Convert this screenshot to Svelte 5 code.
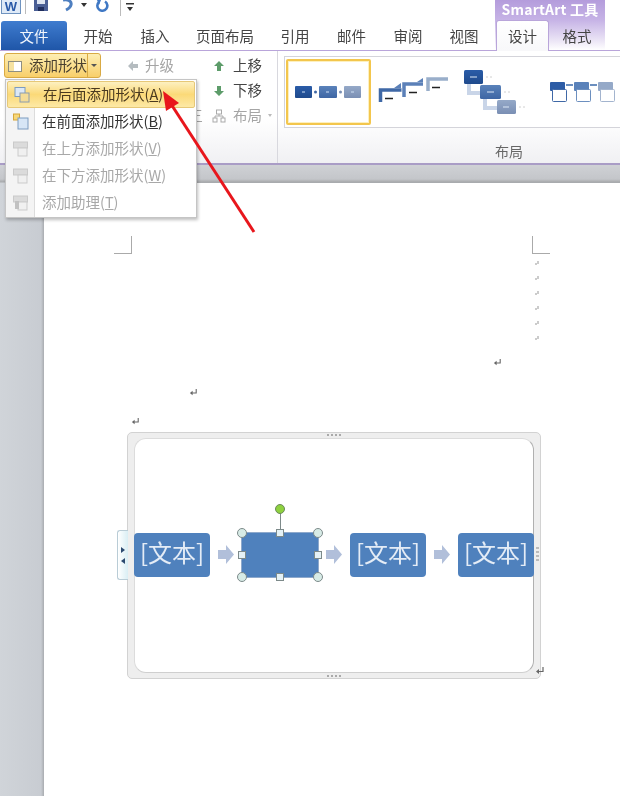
<script>
  const tabs = [
    { label: "开始", w: 60 },
    { label: "插入", w: 54 },
    { label: "页面布局", w: 86 },
    { label: "引用", w: 54 },
    { label: "邮件", w: 59 },
    { label: "审阅", w: 54 },
    { label: "视图", w: 58 },
  ];

  const menuItems = [
    { label: "在后面添加形状", key: "A", active: true, muted: false },
    { label: "在前面添加形状", key: "B", active: false, muted: false },
    { label: "在上方添加形状", key: "V", active: false, muted: true },
    { label: "在下方添加形状", key: "W", active: false, muted: true },
    { label: "添加助理", key: "T", active: false, muted: true },
  ];

  const softReturns = [0, 1, 2, 3, 4, 5];
  const corners = ["tl", "tr", "bl", "br"];
  const sides = ["t", "r", "b", "l"];
</script>

{#snippet returnMark(size)}
  <svg class="ret" width={size} height={size} viewBox="0 0 10 10">
    <path d="M8 1v4.500H3" fill="none" stroke="#666" stroke-width="1.200" />
    <path d="M4 3 1 5.500 4 8z" fill="#666" />
  </svg>
{/snippet}

{#snippet menuIcon(i)}
  <svg width="18" height="18" viewBox="0 0 18 18">
    {#if i === 0}
      <rect x="2" y="1.500" width="10" height="9" fill="#dce8f6" stroke="#7d9cc0" />
      <rect x="7" y="7" width="9" height="9" fill="#f4dc96" stroke="#8a9cb0" />
    {:else if i === 1}
      <rect x="1.500" y="1" width="6" height="6" fill="#f7d777" stroke="#d6a63a" />
      <rect x="6" y="5" width="10" height="11" fill="#d7e6f6" stroke="#7d9cc0" />
    {:else}
      <g opacity="0.55">
        <rect x="1.500" y="2" width="14" height="6" fill="#c8c8c8" stroke="#a8a8a8" />
        <rect x="6" y="8" width="9" height="8" fill="#eee" stroke="#aaa" />
        {#if i === 4}<rect x="3" y="7" width="4" height="8" fill="#999" />{/if}
      </g>
    {/if}
  </svg>
{/snippet}

<div class="app">
  <div class="qat">
    <svg class="q-word" width="20" height="14" viewBox="0 0 20 14">
      <rect x="0.500" y="-2" width="19" height="15.500" fill="#dfeaf7" stroke="#6f93bf" />
      <text x="10" y="11" text-anchor="middle" class="w-letter">W</text>
    </svg>
    <span class="q-sep"></span>
    <svg class="q-save" width="14" height="12" viewBox="0 0 14 12">
      <path d="M0 0h14v11H0z" fill="#4a5f95" />
      <rect x="3" y="0" width="8" height="4" fill="#dfe6f2" />
      <rect x="4" y="7" width="6" height="4" fill="#1f2d5c" />
    </svg>
    <svg class="q-undo" width="14" height="12" viewBox="0 0 14 12">
      <path d="M3 0c5-1 9 1 8 5-.6 2.500-3 4-5 5" fill="none" stroke="#4e7fc0" stroke-width="3" />
    </svg>
    <span class="q-caret"></span>
    <svg class="q-redo" width="14" height="12" viewBox="0 0 14 12">
      <path d="M9 1.500A5 5 0 1 1 3 2" fill="none" stroke="#3f78c4" stroke-width="2.600" />
      <path d="M5 0 1 0l2 5z" fill="#3f78c4" />
    </svg>
    <span class="q-sep second"></span>
    <svg class="q-custom" width="9" height="8" viewBox="0 0 9 8">
      <path d="M0 0h8v1.500H0z" fill="#333" />
      <path d="M1 4h6L4 8z" fill="#333" />
    </svg>
    <div class="context-title">SmartArt 工具</div>
  </div>

  <div class="tabs">
    <div class="tab-file">文件</div>
    {#each tabs as tab}
      <div class="tab" style="width: {tab.w}px">{tab.label}</div>
    {/each}
    <div class="context-tabs">
      <div class="tab-active">设计</div>
      <div class="tab-format">格式</div>
    </div>
  </div>

  <div class="ribbon">
    <div class="group-shapes">
      <div class="shape-col">
        <div class="split-btn">
          <span class="split-main">
            <svg width="15" height="14" viewBox="0 0 15 14">
              <rect x="0.500" y="2.500" width="13" height="10" fill="#fff" stroke="#8f8f80" />
              <rect x="1" y="3" width="5" height="9" fill="#f6e2a0" />
            </svg>
            <span>添加形状</span>
          </span>
          <span class="split-arrow"></span>
        </div>
      </div>
      <div class="level-col">
        <div class="cmd muted">
          <svg class="cmd-icon" width="12" height="12" viewBox="0 0 12 12"><path d="M6 1 1 6l5 5V8h5V4H6z" fill="#b5bcc0" /></svg>
          升级
        </div>
        <div class="cmd"></div>
        <div class="cmd muted end">三</div>
      </div>
      <div class="move-col">
        <div class="cmd">
          <svg class="cmd-icon" width="12" height="12" viewBox="0 0 12 12"><path d="M6 1 1 6h3v5h4V6h3z" fill="#5d9c6a" /></svg>
          上移
        </div>
        <div class="cmd">
          <svg class="cmd-icon" width="12" height="12" viewBox="0 0 12 12"><path d="M6 11 1 6h3V1h4v5h3z" fill="#5d9c6a" /></svg>
          下移
        </div>
        <div class="cmd muted">
          <svg class="cmd-icon layout-icon" width="14" height="14" viewBox="0 0 14 14">
            <rect x="4.500" y="1" width="5" height="4" fill="none" stroke="#aaa" />
            <path d="M7 5v2M3 9V7h8v2" fill="none" stroke="#aaa" />
            <rect x="1" y="9" width="4" height="4" fill="none" stroke="#aaa" />
            <rect x="9" y="9" width="4" height="4" fill="none" stroke="#aaa" />
          </svg>
          布局 <span class="mini-caret"></span>
        </div>
      </div>
    </div>

    <div class="group-layouts">
      <div class="gallery">
        <div class="thumb-selected">
          <svg width="72" height="16" viewBox="0 0 72 16">
            <defs>
              <linearGradient id="tb1" x1="0" y1="0" x2="0" y2="1"><stop offset="0" stop-color="#2a5ca8" /><stop offset="1" stop-color="#1f4a8c" /></linearGradient>
              <linearGradient id="tb2" x1="0" y1="0" x2="0" y2="1"><stop offset="0" stop-color="#5a82ba" /><stop offset="1" stop-color="#3e66a4" /></linearGradient>
              <linearGradient id="tb3" x1="0" y1="0" x2="0" y2="1"><stop offset="0" stop-color="#95a9c8" /><stop offset="1" stop-color="#7a8fb4" /></linearGradient>
            </defs>
            <rect x="2" y="2" width="17" height="12" rx="1" fill="url(#tb1)" />
            <rect x="26" y="2" width="18" height="12" rx="1" fill="url(#tb2)" />
            <rect x="51" y="2" width="17" height="12" rx="1" fill="url(#tb3)" />
            <circle cx="22.500" cy="8" r="1.500" fill="#3e66a4" />
            <circle cx="47.500" cy="8" r="1.500" fill="#7a8fb4" />
            <path d="M9 8h3M33 8h3M58 8h3" stroke="#cfe0f5" />
          </svg>
        </div>
        <svg class="thumbs" width="248" height="70" viewBox="372 57 248 70">
          <!-- staircase layout -->
          <g fill="none" stroke-width="3.500">
            <path d="M381.500 102V90h21" stroke="#3f68a6" />
            <path d="M405 97V84h19" stroke="#5b80b8" />
            <path d="M429 91V79h20" stroke="#99aeca" />
          </g>
          <path d="M395 88l7-5v5zM418 82l6-4v4z" fill="#5b80b8" />
          <path d="M386 98.500h8M410 92.500h8M433 87.500h8" stroke="#222" stroke-width="1.300" />
          <!-- descending boxes -->
          <path d="M470 84v9h12M486 99v9h12" fill="none" stroke="#c9d5e8" stroke-width="4" />
          <rect x="465" y="70" width="19" height="14" rx="1.500" fill="url(#tb1)" />
          <rect x="481" y="85" width="21" height="14" rx="1.500" fill="url(#tb2)" />
          <rect x="498" y="100" width="19" height="14" rx="1.500" fill="url(#tb3)" />
          <path d="M471 77h7M488 92h7M504 107h6" stroke="#dce8f6" />
          <path d="M487 77h8M505 92h8M520 107h8" stroke="#d0d0d0" stroke-dasharray="2 2" />
          <!-- cards -->
          <rect x="551" y="82" width="15" height="9" rx="1" fill="#2c5ca6" />
          <rect x="575" y="82" width="15" height="9" rx="1" fill="#5a82ba" />
          <rect x="599" y="82" width="15" height="9" rx="1" fill="#95a9c8" />
          <g fill="#fff">
            <rect x="553.500" y="89.500" width="14" height="12" rx="1" stroke="#3f68a6" />
            <rect x="577.500" y="89.500" width="14" height="12" rx="1" stroke="#6c8fbf" />
            <rect x="601.500" y="89.500" width="14" height="12" rx="1" stroke="#a3b4ce" />
          </g>
          <path d="M567 85h7M591 85h7" stroke="#6c8fbf" stroke-width="2" />
        </svg>
      </div>
      <div class="group-label">布局</div>
    </div>
  </div>

  <div class="workspace">
    <div class="page">
      <div class="crops">
        <span class="crop crop-left"></span>
        <span class="crop crop-right"></span>
      </div>
      <div class="soft-returns">
        {#each softReturns as r}
          <svg width="6" height="6" viewBox="0 0 6 6"><path d="M4 0v3M3 3H1" stroke="#999" fill="none" /></svg>
        {/each}
      </div>
      <div class="para para-right">{@render returnMark(9)}</div>
      <div class="para para-mid">{@render returnMark(9)}</div>
      <div class="para para-anchor">{@render returnMark(9)}</div>

      <div class="smartart">
        <div class="side-tab">
          <span class="tri-r"></span>
          <span class="tri-l"></span>
        </div>
        <span class="grip grip-t"></span>
        <span class="grip grip-b"></span>
        <span class="grip grip-r"></span>
        <div class="canvas">
          <div class="flow-box">[文本]</div>
          <span class="flow-arrow"></span>
          <div class="flow-box selected">
            <span class="rot-line"></span>
            <span class="rot-handle"></span>
            {#each corners as c}<span class="h-corner {c}"></span>{/each}
            {#each sides as s}<span class="h-side {s}"></span>{/each}
          </div>
          <span class="flow-arrow"></span>
          <div class="flow-box">[文本]</div>
          <span class="flow-arrow"></span>
          <div class="flow-box">[文本]</div>
        </div>
        <span class="end-return">{@render returnMark(10)}</span>
      </div>
    </div>
  </div>

  <!-- dropdown opened from the split button -->
  <div class="menu">
    {#each menuItems as item, i}
      <div class="menu-item" class:active={item.active} class:muted={item.muted}>
        <span class="menu-icon">{@render menuIcon(i)}</span>
        <span class="menu-text">{item.label}(<u>{item.key}</u>)</span>
      </div>
    {/each}
  </div>

  <!-- red annotation arrow -->
  <svg class="annotation" width="620" height="260" viewBox="0 0 620 260">
    <path d="M254 232 171 104" stroke="#e8161c" stroke-width="3" fill="none" />
    <path d="M163 91 179 103 166 111z" fill="#e8161c" />
  </svg>
</div>

<style>
  :global(body) {
    margin: 0;
  }

  .app {
    position: relative;
    width: 620px;
    height: 796px;
    overflow: hidden;
    display: flex;
    flex-direction: column;
    background: #fff;
    color: #444;
    font-family: "Noto Sans CJK SC", "Liberation Sans", sans-serif;
    font-size: 14.5px;
    filter: blur(0.4px);
  }

  /* ── Quick access bar ── */
  .qat {
    height: 20px;
    flex: none;
    display: flex;
    align-items: flex-start;
    position: relative;
  }

  .q-word { margin-left: 1px; }
  .w-letter { font: bold 13px "Liberation Sans", sans-serif; fill: #2a5aa8; }
  .q-sep { width: 1px; height: 14px; background: #bbb; margin-left: 4px; }
  .q-sep.second { height: 16px; margin-left: 10px; }
  .q-save { margin-left: 8px; }
  .q-undo { margin-left: 12px; }
  .q-caret {
    margin: 3px 0 0 7px;
    border-left: 3px solid transparent;
    border-right: 3px solid transparent;
    border-top: 4px solid #333;
  }
  .q-redo { margin-left: 9px; }
  .q-custom { margin: 3px 0 0 5px; }

  .context-title {
    position: absolute;
    left: 495px;
    top: 0;
    width: 110px;
    height: 20px;
    box-sizing: border-box;
    text-align: center;
    line-height: 18px;
    font-size: 14px;
    font-weight: 600;
    letter-spacing: 0.2px;
    color: #fff;
    background: linear-gradient(#b49cdc, #c6b3e6);
    white-space: nowrap;
  }

  /* ── Tabs ── */
  .tabs {
    height: 30px;
    flex: none;
    display: flex;
    align-items: stretch;
    position: relative;
    z-index: 1;
  }

  .tab-file {
    width: 66px;
    margin: 1px 1px 0 1px;
    border-radius: 3px 3px 0 0;
    background: linear-gradient(#3f7ccf, #1f56a8);
    color: #f2f6fc;
    text-align: center;
    line-height: 30px;
  }

  .tab {
    text-align: center;
    line-height: 32px;
    flex: none;
  }

  .context-tabs {
    margin-left: 2px;
    width: 110px;
    display: flex;
    background: linear-gradient(#c6b3e6, #ece6f6 70%, #fff);
  }

  .tab-active {
    width: 53px;
    margin-left: 1px;
    box-sizing: border-box;
    height: 31px;
    background: linear-gradient(#fff, #f8f8fa);
    border: 1px solid #b9a5da;
    border-bottom: none;
    border-radius: 3px 3px 0 0;
    text-align: center;
    line-height: 30px;
  }

  .tab-format {
    flex: 1;
    text-align: center;
    line-height: 32px;
  }

  /* ── Ribbon ── */
  .ribbon {
    height: 115px;
    flex: none;
    box-sizing: border-box;
    display: flex;
    border-top: 1px solid #b9a5da;
    border-bottom: 2px solid #a99cc6;
    background: linear-gradient(#fff 60%, #f0f0f3);
  }

  .group-shapes {
    width: 278px;
    flex: none;
    box-sizing: border-box;
    display: flex;
    padding: 2px 0 0 4px;
    border-right: 1px solid #d8d8de;
  }

  .shape-col { width: 121px; }

  .split-btn {
    width: 97px;
    height: 25px;
    box-sizing: border-box;
    display: flex;
    border: 1px solid #d9aa44;
    border-radius: 3px;
    background: linear-gradient(#fdeeb4, #f8cf6a);
    color: #4a4030;
  }

  .split-main {
    flex: 1;
    display: flex;
    align-items: center;
    gap: 6px;
    padding-left: 3px;
    border-right: 1px solid #d9aa44;
    line-height: 1;
    white-space: nowrap;
    min-width: 0;
  }

  .split-arrow {
    width: 12px;
    flex: none;
    position: relative;
  }

  .split-arrow::after {
    content: "";
    position: absolute;
    left: 3px;
    top: 10px;
    border-left: 3px solid transparent;
    border-right: 3px solid transparent;
    border-top: 3px solid #555;
  }

  .level-col { width: 82px; display: flex; flex-direction: column; }
  .level-col .cmd-icon { margin-right: -2px; }
  .move-col { flex: 1; display: flex; flex-direction: column; }
  .move-col .cmd-icon { margin-left: 6px; }
  .move-col .layout-icon { margin-left: 5px; margin-right: -1px; }

  .cmd {
    height: 25px;
    display: flex;
    align-items: center;
    gap: 8px;
    line-height: 1;
    white-space: nowrap;
  }

  .cmd.muted { color: #a5a5a5; }
  .cmd.end { justify-content: flex-end; padding-right: 4px; }
  .cmd-icon { margin-left: 2px; }

  .mini-caret {
    margin-left: -2px;
    border-left: 2.500px solid transparent;
    border-right: 2.500px solid transparent;
    border-top: 3px solid #bbb;
  }

  .group-layouts {
    flex: 1;
    display: flex;
    flex-direction: column;
    padding: 5px 0 0 6px;
    min-width: 0;
  }

  .gallery {
    height: 72px;
    flex: none;
    display: flex;
    box-sizing: border-box;
    border: 1px solid #d4d4da;
    border-right: none;
    background: #fff;
    padding-left: 1px;
    align-items: center;
  }

  .thumb-selected {
    width: 85px;
    height: 66px;
    flex: none;
    box-sizing: border-box;
    display: flex;
    align-items: center;
    justify-content: center;
    border: 2px solid #f3c64d;
    border-radius: 2px;
    box-shadow: inset 0 0 0 1px #fdf0bf;
    background: #fff;
  }

  .thumbs { flex: none; display: block; }

  .group-label {
    text-align: center;
    margin-top: 13px;
    padding-left: 114px;
    font-size: 14px;
    line-height: 20px;
    color: #666;
  }

  /* ── Document ── */
  .workspace {
    flex: 1;
    min-height: 0;
    padding: 18px 0 0 44px;
    background:
      linear-gradient(#cfd1d5, #c4c6ca 14px, #a8aaac 17px, transparent 18px),
      linear-gradient(90deg, #d0d4d9, #c8ccd2 41px, #a9acb0 44px);
  }

  .page {
    height: 100%;
    background: #fff;
    padding-top: 53px;
    box-sizing: border-box;
    position: relative;
  }

  .crops {
    display: flex;
    justify-content: space-between;
    margin-left: 70px;
    width: 436px;
    height: 18px;
  }

  .crop {
    width: 17px;
    height: 17px;
    border-bottom: 1px solid #aaa;
  }
  .crop-left { border-right: 1px solid #aaa; }
  .crop-right { border-left: 1px solid #aaa; }

  .soft-returns {
    display: flex;
    flex-direction: column;
    gap: 9px;
    margin: 7px 0 0 490px;
    width: 6px;
  }

  .soft-returns svg { display: block; }

  .para { height: 9px; line-height: 0; }
  .para-right { margin: 16px 0 0 449px; }
  .para-mid { margin: 21px 0 0 145px; }
  .para-anchor { margin: 20px 0 0 87px; }

  .smartart {
    position: relative;
    width: 414px;
    height: 247px;
    box-sizing: border-box;
    margin: 6px 0 0 83px;
    padding: 5px 6px 5px 6px;
    border: 1px solid #d2d2d2;
    border-radius: 5px;
    background: #eeeeee;
  }

  .canvas {
    height: 100%;
    box-sizing: border-box;
    display: flex;
    align-items: center;
    gap: 8px;
    padding-bottom: 2px;
    background: #fff;
    border: 1px solid #dcdcdc;
    border-right-color: #b0b0b0;
    border-bottom-color: #cfcfcf;
    border-radius: 12px;
  }

  .flow-box {
    width: 76px;
    height: 44px;
    flex: none;
    box-sizing: border-box;
    padding-bottom: 5px;
    display: flex;
    align-items: center;
    justify-content: center;
    background: #4f81bd;
    border-radius: 4px;
    color: #e4ecf6;
    font-size: 24px;
    line-height: 1;
    position: relative;
    white-space: nowrap;
  }

  .flow-box:first-child { margin-left: -1px; }

  .flow-box.selected {
    width: 78px;
    height: 46px;
    padding-bottom: 0;
    border-radius: 0;
    border: 1px solid #8ea9cc;
    margin: 0 -1px;
  }

  .flow-arrow {
    width: 16px;
    height: 19px;
    flex: none;
    background: #b1bfda;
    clip-path: polygon(0 26%, 50% 26%, 50% 0, 100% 50%, 50% 100%, 50% 74%, 0 74%);
  }

  .h-corner, .h-side, .rot-handle {
    position: absolute;
    box-sizing: border-box;
  }

  .h-corner {
    width: 10px;
    height: 10px;
    border-radius: 50%;
    background: #d7ebe6;
    border: 1px solid #7d8a8a;
  }
  .h-corner.tl { left: -5px; top: -5px; }
  .h-corner.tr { right: -5px; top: -5px; }
  .h-corner.bl { left: -5px; bottom: -5px; }
  .h-corner.br { right: -5px; bottom: -5px; }

  .h-side {
    width: 8px;
    height: 8px;
    background: #e4f1f6;
    border: 1px solid #7d8a8a;
  }
  .h-side.t { left: 50%; top: -4px; margin-left: -4px; }
  .h-side.b { left: 50%; bottom: -4px; margin-left: -4px; }
  .h-side.l { left: -4px; top: 50%; margin-top: -4px; }
  .h-side.r { right: -4px; top: 50%; margin-top: -4px; }

  .rot-line {
    position: absolute;
    left: 50%;
    top: -20px;
    width: 1px;
    height: 20px;
    background: #7d8a8a;
  }

  .rot-handle {
    left: 50%;
    top: -29px;
    margin-left: -5px;
    width: 10px;
    height: 10px;
    border-radius: 50%;
    background: #8ed13f;
    border: 1px solid #6b8a5a;
  }

  .side-tab {
    position: absolute;
    left: -11px;
    top: 97px;
    width: 11px;
    height: 50px;
    box-sizing: border-box;
    border: 1px solid #b9ccd6;
    border-right: none;
    border-radius: 3px 0 0 3px;
    background: linear-gradient(90deg, #fff, #d9eef4);
    display: flex;
    flex-direction: column;
    align-items: center;
    justify-content: center;
    gap: 5px;
  }

  .tri-r {
    border-top: 3px solid transparent;
    border-bottom: 3px solid transparent;
    border-left: 4px solid #2c4a70;
  }
  .tri-l {
    border-top: 3px solid transparent;
    border-bottom: 3px solid transparent;
    border-right: 4px solid #2c4a70;
  }

  .grip {
    position: absolute;
  }
  .grip-t, .grip-b {
    left: 199px;
    width: 14px;
    height: 2px;
    background: repeating-linear-gradient(90deg, #aaa 0 2px, transparent 2px 4px);
  }
  .grip-t { top: 1px; }
  .grip-b { bottom: 1px; }
  .grip-r {
    right: 1px;
    top: 114px;
    width: 3px;
    height: 16px;
    background: repeating-linear-gradient(#bbb 0 2px, transparent 2px 4px);
  }

  .end-return {
    position: absolute;
    right: -5px;
    bottom: 2px;
    line-height: 0;
  }

  /* ── Dropdown ── */
  .menu {
    position: absolute;
    left: 5px;
    top: 79px;
    width: 192px;
    height: 139px;
    box-sizing: border-box;
    padding: 1px;
    border: 1px solid #c5c5c5;
    background: linear-gradient(90deg, #f4f4f4 28px, #dcdcdc 28px, #dcdcdc 29px, #fff 29px);
    box-shadow: 1px 2px 3px rgba(0, 0, 0, 0.25);
    z-index: 2;
  }

  .menu-item {
    height: 27px;
    display: flex;
    align-items: center;
    color: #333;
    white-space: nowrap;
    box-sizing: border-box;
  }

  .menu-item.muted { color: #a8a8a8; }

  .menu-item.active {
    background: linear-gradient(#fdf0c0, #fbd978 50%, #fde9a6);
    border: 1px solid #e6c878;
    border-radius: 2px;
    color: #4a3a20;
  }

  .menu-icon {
    width: 36px;
    flex: none;
    display: flex;
    justify-content: center;
    padding-right: 6px;
    box-sizing: border-box;
    margin-left: -1px;
  }

  .menu-text { line-height: 1; }

  .annotation {
    position: absolute;
    left: 0;
    top: 0;
    z-index: 3;
    pointer-events: none;
  }
</style>
